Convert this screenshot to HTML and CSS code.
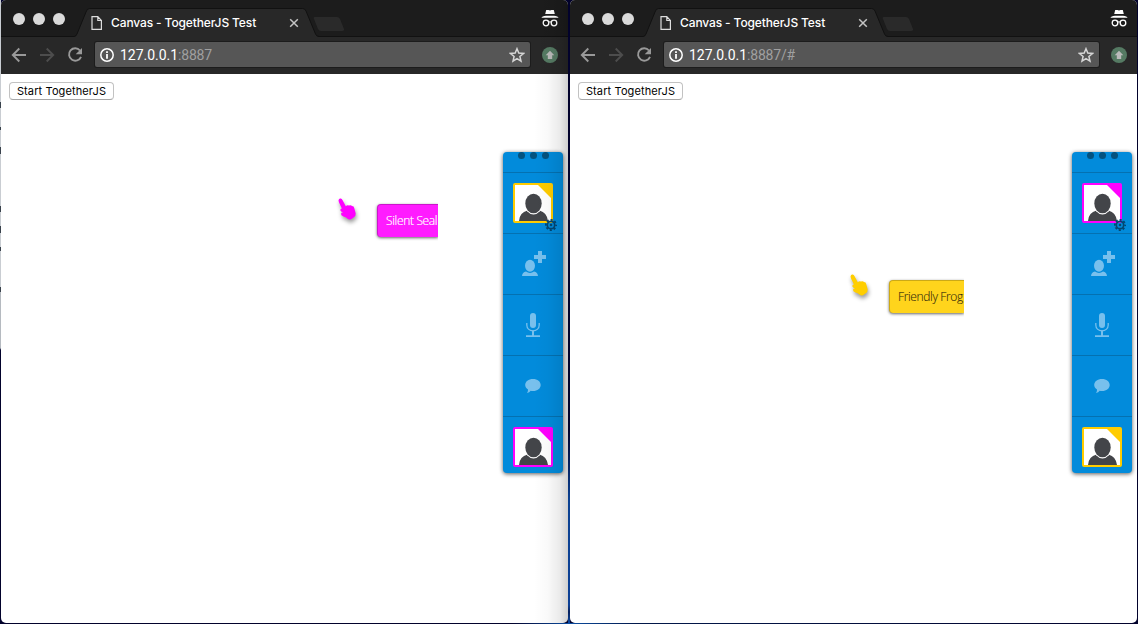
FILE: index.html
```
<!DOCTYPE html>
<html lang="en">
<head>
<meta charset="utf-8">
<title>Canvas - TogetherJS Test</title>
<link rel="stylesheet" href="styles.css">
</head>
<body>
<svg class="sprites" aria-hidden="true">
  <symbol id="tab" viewBox="0 0 272 37">
    <path d="M0 36.5H2Q4 36.5 5 34L14 12Q15 8.500 17.500 8.500H230.500Q233 8.500 234 11L243.500 34Q244.500 36.500 247 36.500H250V37H0Z" fill="#282828"/>
    <path d="M0 36.500H2Q4 36.500 5 34L14 12Q15 8.500 17.500 8.500H230.500Q233 8.500 234 11L243.500 34Q244.500 36.500 247 36.500H250" fill="none" stroke="#111"/>
    <path d="M243 17H265Q267 17 268 19L272 29Q272.500 31 270 31H249Q247 31 246 29L242 19Q241 17 243 17Z" fill="#2a2a2a"/>
  </symbol>
  <symbol id="file" viewBox="0 0 12 14"><path d="M1 .7H6.800L10.400 4.500V13.300H1ZM6.800 .7V4.500H10.400" fill="none" stroke="#ddd" stroke-width="1.200"/></symbol>
  <symbol id="close" viewBox="0 0 10 10"><path d="M1.200 1.200L8.800 8.800M8.800 1.200L1.200 8.800" stroke="#c4c4c4" stroke-width="1.500"/></symbol>
  <symbol id="spy" viewBox="0 0 18 18">
    <path d="M5.200 1H7.500L9 1.500L10.500 1H12.800L13.800 5H4.200ZM.5 8.700Q1 7.300 5 6.800H13Q17 7.300 17.500 8.700Z" fill="#fff"/>
    <path d="M7.800 13.200Q9 12.300 10.200 13.200" stroke="#fff" fill="none"/>
    <circle cx="5" cy="14" r="2.800" fill="none" stroke="#fff" stroke-width="1.300"/><circle cx="13" cy="14" r="2.800" fill="none" stroke="#fff" stroke-width="1.300"/>
  </symbol>
  <symbol id="arrow" viewBox="0 0 16 16"><path d="M15 8H2M8.300 1.500L1.800 8L8.300 14.500" fill="none" stroke="currentColor" stroke-width="1.900"/></symbol>
  <symbol id="reload" viewBox="0 0 16 16"><path d="M13 3.500A6.200 6.200 0 1 0 14 9.800" fill="none" stroke="#999" stroke-width="1.900"/><path d="M15 1V7.200H8.700Z" fill="#999"/></symbol>
  <symbol id="info" viewBox="0 0 14 14"><circle cx="7" cy="7" r="6.200" fill="none" stroke="#fff" stroke-width="1.500"/><path d="M6.100 3.200H7.900V4.900H6.100ZM6.100 6H7.900V10.700H6.100Z" fill="#fff"/></symbol>
  <symbol id="star" viewBox="0 0 16 16"><path d="M8 1.700L9.800 6.100L14.500 6.500L10.900 9.500L12 14.200L8 11.700L4 14.200L5.100 9.500L1.500 6.500L6.200 6.100Z" fill="none" stroke="#d6d6d6" stroke-width="1.500"/></symbol>
  <symbol id="up" viewBox="0 0 16 16"><circle cx="8" cy="8" r="8" fill="#557a63"/><path d="M8 3.800L12.300 8.200H10.200V12H5.800V8.200H3.700Z" fill="#bababa"/></symbol>
  <symbol id="person" viewBox="0 0 36 36">
    <path d="M0 0H24L36 12V36H0Z" fill="#fff"/>
    <path d="M4 36Q4.500 27.500 12.500 25.500Q18.500 30 24.500 25.500Q32 27.500 33 36Z" fill="#434549"/>
    <ellipse cx="18.500" cy="18.800" rx="9" ry="10.600" fill="#fff"/><ellipse cx="18.500" cy="18.500" rx="8.200" ry="9.800" fill="#434549"/>
    <path d="M23 0H36V13Z" fill="currentColor"/>
  </symbol>
  <symbol id="gear" viewBox="-6 -6 12 12">
    <circle r="3.700" fill="none" stroke="#04456f" stroke-width="1.700"/><circle r="1.300" fill="#04456f"/>
    <circle r="5.100" fill="none" stroke="#04456f" stroke-width="1.800" stroke-dasharray="2.100 1.906" stroke-dashoffset="1.050"/>
  </symbol>
  <symbol id="invite" viewBox="0 0 24 26">
    <path d="M16 0H20V4H24V8H20V12H16V8H12V4H16Z"/><ellipse cx="8" cy="14.800" rx="5" ry="6"/>
    <path d="M0 25Q.3 21.300 4 20.600Q8 23.500 12 20.600Q15.700 21.300 16 25Z"/>
  </symbol>
  <symbol id="mic" viewBox="0 0 14 24"><rect x="4" y="0" width="6" height="15" rx="3"/><path d="M.8 10V12C.8 19.700 13.200 19.700 13.200 12V10" fill="none" stroke="#78c0ed" stroke-width="1.300"/><path d="M6 17.500H8V22.200H14V24H0V22.200H6Z"/></symbol>
  <symbol id="chat" viewBox="0 0 16 14"><path d="M8 0C12.500 0 15.700 2.600 15.700 6S12.500 12 8 12Q6.500 12 5.700 11.700Q4.500 13.500 2 14Q3.200 12.300 3 10.400C1.200 9.300.2 7.900.2 6C.2 2.600 3.500 0 8 0Z"/></symbol>
  <symbol id="hand" viewBox="0 0 18 22"><path d="M.5 2.500Q.7.300 2.700.6Q3.900.8 4.600 2.300L7.800 8.200Q9.400 6.500 11 7.500Q13 6.700 14 8.100Q16 8.200 16.300 10.200L17.700 15.500Q18 18 15.500 19.500L13 21.300Q10.800 22 9.300 20.500Q8 19 5.500 18.500Q2.700 17.500 3 15.800Q3.200 14.600 5.200 14.500Q2.600 13.500 2.300 12.200Q2.300 10.700 3.900 10.400L.9 4.200Z" fill="currentColor"/></symbol>
</svg>
<main class="desktop">
  <section class="window window-back">
    <header class="titlebar">
      <svg class="tab-shape"><use href="#tab"/></svg>
      <div class="lights"><i></i><i></i><i></i></div>
      <svg class="tab-file"><use href="#file"/></svg>
      <span class="tab-title">Canvas - TogetherJS Test</span>
      <svg class="tab-close"><use href="#close"/></svg>
      <svg class="spy"><use href="#spy"/></svg>
    </header>
    <nav class="toolbar">
      <svg class="nav-icon"><use href="#arrow"/></svg>
      <svg class="nav-icon forward"><use href="#arrow"/></svg>
      <svg class="nav-icon"><use href="#reload"/></svg>
      <div class="address"><svg class="info"><use href="#info"/></svg><span class="url">127.0.0.1<span class="port">:8887</span></span><svg class="star"><use href="#star"/></svg></div>
      <svg class="extension"><use href="#up"/></svg>
    </nav>
    <div class="page"><button class="start">Start TogetherJS</button></div>
    <div class="cursor seal"><svg class="hand"><use href="#hand"/></svg><span class="label">Silent Seal</span></div>
    <aside class="dock">
      <div class="handle"><i></i><i></i><i></i></div>
      <div class="cell"><svg class="avatar yellow"><use href="#person"/></svg><svg class="gear"><use href="#gear"/></svg></div>
      <div class="cell"><svg class="invite"><use href="#invite"/></svg></div>
      <div class="cell"><svg class="mic"><use href="#mic"/></svg></div>
      <div class="cell"><svg class="chat"><use href="#chat"/></svg></div>
      <div class="cell last"><svg class="avatar pink"><use href="#person"/></svg></div>
    </aside>
  </section>
  <section class="window">
    <header class="titlebar">
      <svg class="tab-shape"><use href="#tab"/></svg>
      <div class="lights"><i></i><i></i><i></i></div>
      <svg class="tab-file"><use href="#file"/></svg>
      <span class="tab-title">Canvas - TogetherJS Test</span>
      <svg class="tab-close"><use href="#close"/></svg>
      <svg class="spy"><use href="#spy"/></svg>
    </header>
    <nav class="toolbar">
      <svg class="nav-icon"><use href="#arrow"/></svg>
      <svg class="nav-icon forward"><use href="#arrow"/></svg>
      <svg class="nav-icon"><use href="#reload"/></svg>
      <div class="address"><svg class="info"><use href="#info"/></svg><span class="url">127.0.0.1<span class="port">:8887/#</span></span><svg class="star"><use href="#star"/></svg></div>
      <svg class="extension"><use href="#up"/></svg>
    </nav>
    <div class="page"><button class="start">Start TogetherJS</button></div>
    <div class="cursor frog"><svg class="hand"><use href="#hand"/></svg><span class="label">Friendly Frog</span></div>
    <aside class="dock">
      <div class="handle"><i></i><i></i><i></i></div>
      <div class="cell"><svg class="avatar pink"><use href="#person"/></svg><svg class="gear"><use href="#gear"/></svg></div>
      <div class="cell"><svg class="invite"><use href="#invite"/></svg></div>
      <div class="cell"><svg class="mic"><use href="#mic"/></svg></div>
      <div class="cell"><svg class="chat"><use href="#chat"/></svg></div>
      <div class="cell last"><svg class="avatar yellow"><use href="#person"/></svg></div>
    </aside>
  </section>
</main>
</body>
</html>
```
FILE: styles.css
```
* { box-sizing: border-box; }
body { margin: 0; font-family: Inter, Roboto, sans-serif; overflow: hidden; }
svg { display: block; flex: none; }
.sprites { position: absolute; width: 0; height: 0; }
.desktop {
  width: 1138px; height: 624px; padding: 0 1px 1px; display: flex; gap: 2px;
  background: linear-gradient(#c9cdd2 102px, #39424c 102px 108px, #c9cdd2 108px 127px, #39424c 127px 130px, #c9cdd2 130px 147px, #39424c 147px 154px, #c9cdd2 154px 206px, #39424c 206px 212px, #c9cdd2 212px 226px, #39424c 226px 233px, #c9cdd2 233px 247px, #39424c 247px 251px, #c9cdd2 251px 287px, #39424c 287px 292px, #b5bac0 292px 348px, #02022c 350px) 0 0 / 1px 100% no-repeat,
    linear-gradient(#02022c 430px, #0a4192 500px, #0b3f94 605px, #06205c 612px, #0a4da8) 568px 0 / 2px 100% no-repeat,
    linear-gradient(90deg, #02022c 45%, #0b4da2 50%, #02184a 56%, #02022c) 0 100% / 100% 1px no-repeat, #02022c;
}
.window { position: relative; width: 567px; height: 623px; display: flex; flex-direction: column; background: #fff; border-radius: 5px; overflow: hidden; }
.window-back::after {
  content: ""; position: absolute; top: 0; right: 0; bottom: 0; width: 34px; pointer-events: none;
  background: linear-gradient(90deg, transparent, rgba(0,0,0,.025) 40%, rgba(0,0,0,.08) 75%, rgba(0,0,0,.19));
}
.titlebar { position: relative; flex: none; height: 37px; display: flex; align-items: flex-start; padding-left: 12px; background: #1c1c1c; border-bottom: 1px solid #111; }
.tab-shape { position: absolute; left: 71px; top: 0; width: 272px; height: 37px; }
.lights { display: flex; gap: 8px; margin-top: 13px; }
.lights i { width: 12px; height: 12px; border-radius: 50%; background: #dadada; }
.tab-file { position: relative; width: 12px; height: 14px; margin: 16px 8px 0 26px; }
.tab-title { position: relative; width: 178px; margin-top: 14px; font-size: 12px; line-height: 17px; font-weight: 500; color: #fff; letter-spacing: -.12px; white-space: nowrap; }
.tab-close { position: relative; width: 10px; height: 10px; margin-top: 18px; }
.spy { width: 18px; height: 18px; margin: 9px 9px 0 auto; }
.toolbar { flex: none; height: 37px; display: flex; align-items: center; padding: 0 10px 2px; background: #282828; }
.nav-icon { width: 16px; height: 16px; margin-right: 12px; color: #999; }
.nav-icon.forward { color: #4d4d4d; transform: scaleX(-1); }
.address { width: 435px; height: 25px; margin-right: 12px; display: flex; align-items: center; padding: 0 5px; background: #565656; border-radius: 2px; box-shadow: 0 0 0 1px #1c1c1c; }
.info { width: 14px; height: 14px; margin-right: 6px; }
.url { flex: 1; font-family: Roboto, sans-serif; font-size: 14px; line-height: 20px; letter-spacing: -.03px; color: #fff; }
.port { color: #a0a0a0; letter-spacing: -.18px; }
.star { width: 16px; height: 16px; }
.extension { width: 16px; height: 16px; }
.page { flex: 1; padding: 8px; }
.start { display: block; width: 105px; height: 18px; padding: 0; border: 1px solid #c2c2c2; border-bottom-color: #a6a6a6; border-radius: 4px; background: #fff; font: 11px/16px Inter, sans-serif; letter-spacing: .12px; color: #000; white-space: nowrap; }
.cursor { position: absolute; display: flex; align-items: flex-start; gap: 21px; }
.hand { width: 18px; height: 22px; filter: drop-shadow(1px 3px 2px rgba(0,0,0,.4)); }
.label { height: 33px; margin-top: 6px; padding-left: 8px; border: 1px solid rgba(0,0,0,.2); border-right: 0; border-bottom: 0; border-radius: 4px 0 0 4px; font: 300 12px/32px "Open Sans", sans-serif; white-space: nowrap; box-shadow: 0 1px 3px rgba(0,0,0,.6); clip-path: inset(-2px 0 -8px -6px); }
.seal { left: 337px; top: 198px; color: #f0f; }
.seal .label { width: 61px; background: #ff1cff; color: #fff; letter-spacing: -.34px; -webkit-text-stroke: .2px #fff; }
.frog { left: 280px; top: 274px; color: #ffce00; }
.frog .label { width: 75px; background: #ffd41c; color: #332b0c; letter-spacing: -.36px; -webkit-text-stroke: .1px #332b0c; }
.dock { position: absolute; right: 5px; top: 152px; width: 60px; border-radius: 4px; background: #028bdb; box-shadow: 0 1px 4px rgba(0,0,0,.65); }
.handle { height: 20px; display: flex; justify-content: center; gap: 5px; overflow: hidden; }
.handle i { width: 7px; height: 7px; border-radius: 50%; background: #04527f; }
.cell { position: relative; height: 61px; border-top: 1px solid #0471b1; display: flex; align-items: center; justify-content: center; color: #78c0ed; fill: #78c0ed; }
.cell.last { height: 57px; align-items: flex-start; padding-top: 10px; }
.avatar { width: 40px; height: 40px; border: 2px solid currentColor; border-radius: 2px; }
.yellow { color: #ffcc00; }
.pink { color: #f0f; }
.gear { position: absolute; left: 42px; top: 46px; width: 12px; height: 12px; }
.invite { width: 24px; height: 26px; margin-left: 2px; }
.mic { width: 14px; height: 24px; }
.chat { width: 16px; height: 14px; }
```
